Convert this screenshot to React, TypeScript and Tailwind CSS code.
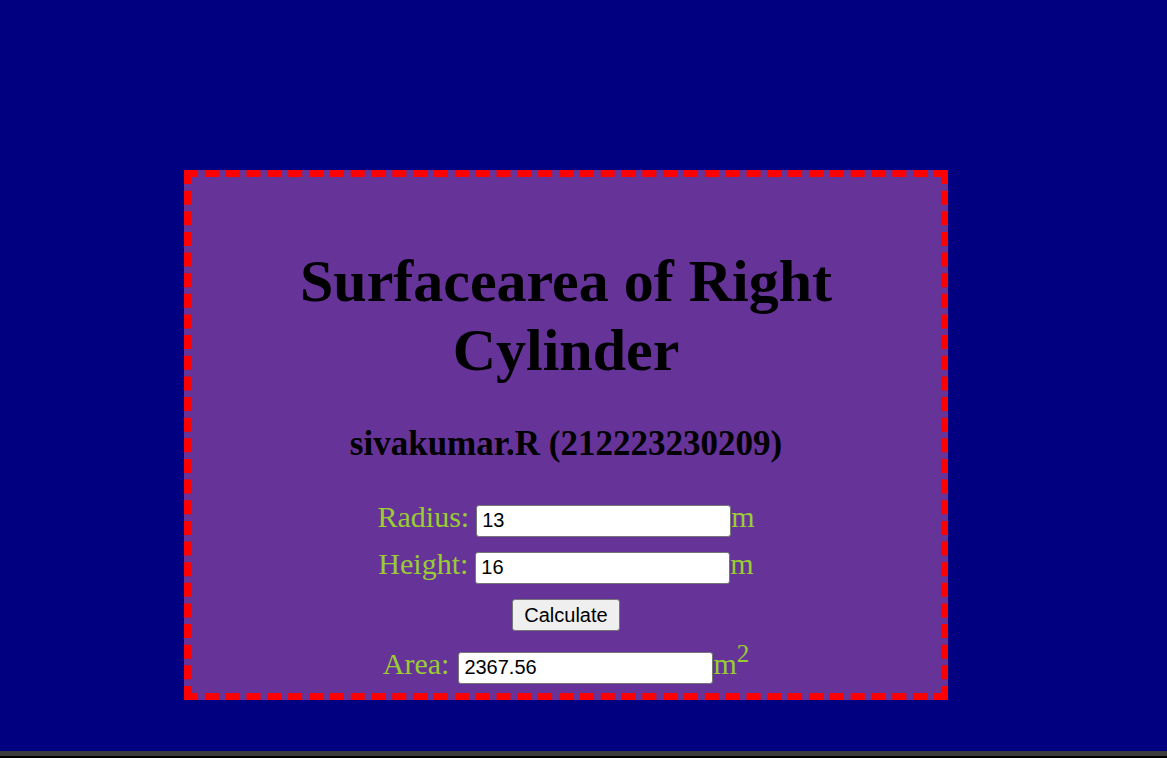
import React, { useState } from 'react';

export default function App() {
  const [radius, setRadius] = useState('13');
  const [height, setHeight] = useState('16');
  const [area, setArea] = useState('2367.56');

  const calculate = () => {
    const r = parseFloat(radius);
    const h = parseFloat(height);
    if (isNaN(r) || isNaN(h)) return;
    setArea((2 * Math.PI * r * (r + h)).toFixed(2));
  };

  const serif = { fontFamily: '"Liberation Serif", "Times New Roman", serif' };
  const inputCls =
    'w-[255px] h-[32px] pl-[5px] pr-1 bg-white text-black text-[20px] border border-[#767676] rounded-[3px] outline-none font-["Liberation_Sans",Arial,sans-serif]';

  return (
    <div className="min-h-[758px] h-[758px] w-full bg-[#000080] flex flex-col" style={serif}>
      {/* Card */}
      <div className="ml-[184px] mt-[170px] w-[764px] h-[530px] bg-[#663399] border-[7px] border-dashed border-[#ff0000] flex flex-col items-center">
        <h1 className="mt-[70px] text-[60px] leading-[69px] font-bold text-black text-center">
          Surfacearea of Right
          <br />
          Cylinder
        </h1>
        <h2 className="mt-[39px] text-[35px] leading-[40px] font-bold text-black text-center">
          sivakumar.R (212223230209)
        </h2>

        <div className="mt-[30px] flex flex-col items-center text-[30px] text-[#9acd32]">
          <div className="flex items-baseline h-[47px]">
            <span className="mr-[7px]">Radius:</span>
            <input className={inputCls} value={radius} onChange={(e) => setRadius(e.target.value)} />
            <span>m</span>
          </div>
          <div className="flex items-baseline h-[57px]">
            <span className="mr-[7px]">Height:</span>
            <input className={inputCls} value={height} onChange={(e) => setHeight(e.target.value)} />
            <span>m</span>
          </div>
          <div className="h-[43px] pt-[1px] flex items-start">
            <button
              onClick={calculate}
              className='h-[32px] px-[11px] bg-[#efefef] text-black text-[20px] border border-[#767676] rounded-[3px] font-["Liberation_Sans",Arial,sans-serif]'
            >
              Calculate
            </button>
          </div>
          <div className="flex items-baseline">
            <span className="mr-[9px]">Area:</span>
            <input className={inputCls} value={area} readOnly />
            <span>
              m<sup className="text-[25px] relative -top-[12px] align-baseline">2</sup>
            </span>
          </div>
        </div>
      </div>

      {/* Bottom strip */}
      <div className="mt-auto h-[5px] bg-[#3c3c3c]" />
      <div className="h-[2px] bg-black" />
    </div>
  );
}
